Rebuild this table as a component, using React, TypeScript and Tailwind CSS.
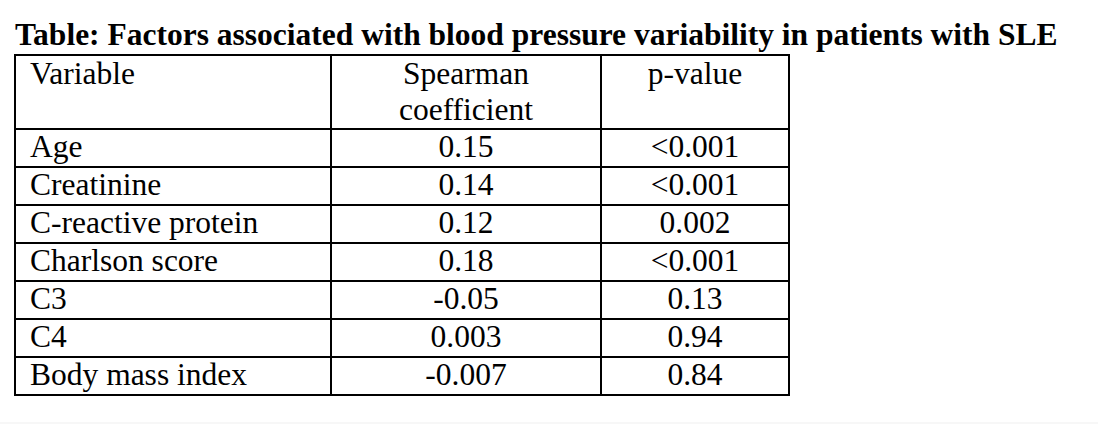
const rows: [string, string, string][] = [
  ['Age', '0.15', '<0.001'],
  ['Creatinine', '0.14', '<0.001'],
  ['C-reactive protein', '0.12', '0.002'],
  ['Charlson score', '0.18', '<0.001'],
  ['C3', '-0.05', '0.13'],
  ['C4', '0.003', '0.94'],
  ['Body mass index', '-0.007', '0.84'],
];

const serif = { fontFamily: '"Liberation Serif", "Times New Roman", serif' };

export default function App() {
  return (
    <div
      className="flex flex-col h-[424px] w-[1098px] bg-white text-black overflow-hidden"
      style={serif}
    >
      <div className="pl-[14px] pt-[17px]">
        <h1 className="text-[31.5px] leading-[36px] font-bold whitespace-nowrap pl-[1px]">
          Table: Factors associated with blood pressure variability in patients with SLE
        </h1>

        <div className="mt-[1px] w-[776px] border-2 border-black text-[31.5px]">
          <div className="grid grid-cols-[314px_270px_1fr] h-[72px] leading-[36px]">
            <div className="pl-[14px]">Variable</div>
            <div className="border-l-2 border-black text-center">
              Spearman
              <br />
              coefficient
            </div>
            <div className="border-l-2 border-black text-center">p-value</div>
          </div>

          {rows.map(([name, coef, p]) => (
            <div
              key={name}
              className="grid grid-cols-[314px_270px_1fr] h-[38px] border-t-2 border-black leading-[33px]"
            >
              <div className="pl-[14px] whitespace-nowrap">{name}</div>
              <div className="border-l-2 border-black text-center">{coef}</div>
              <div className="border-l-2 border-black text-center">{p}</div>
            </div>
          ))}
        </div>
      </div>

      <div className="mt-auto h-[2px] bg-[#f7f7f7]" />
    </div>
  );
}
